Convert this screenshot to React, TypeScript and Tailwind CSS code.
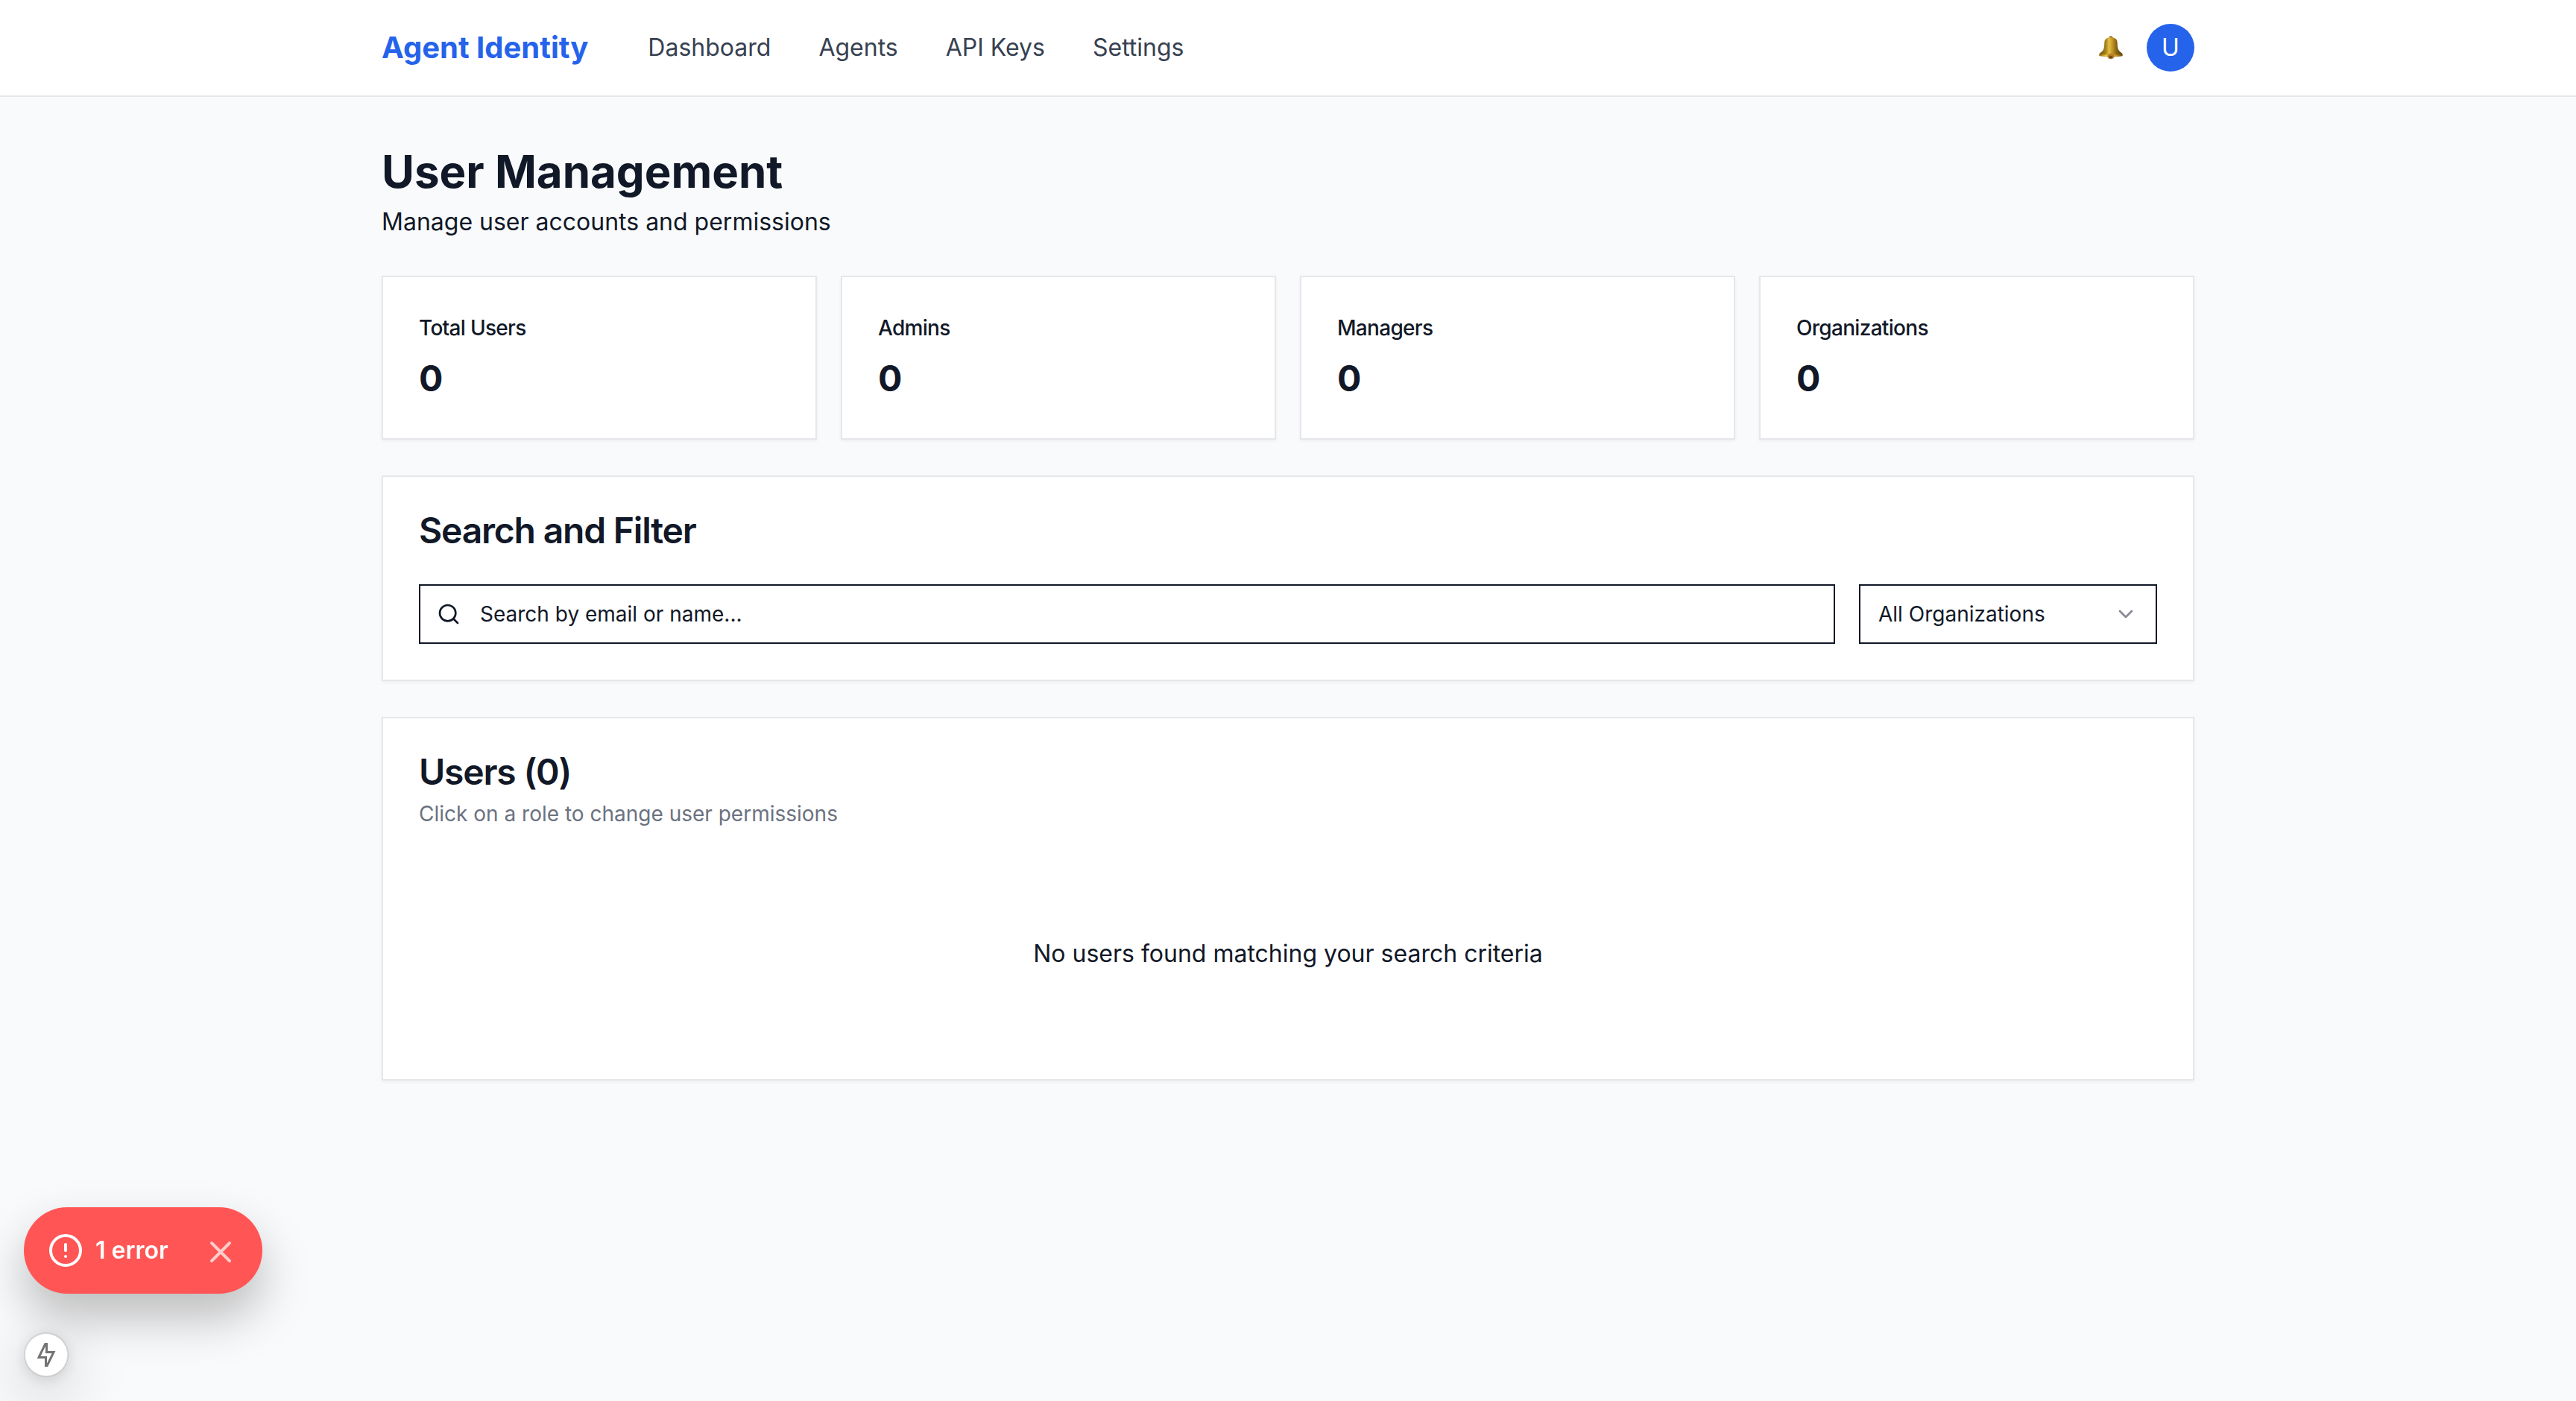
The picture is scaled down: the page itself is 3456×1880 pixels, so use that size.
import { useState, type ReactNode } from "react";
import { ChevronDown, Search } from "lucide-react";

const links = ["Dashboard", "Agents", "API Keys", "Settings"];
const stats = [
  { label: "Total Users", value: 0 },
  { label: "Admins", value: 0 },
  { label: "Managers", value: 0 },
  { label: "Organizations", value: 0 },
];

function BellIcon() {
  return (
    <svg viewBox="0 0 32 32" className="size-8" aria-hidden="true">
      <defs>
        <linearGradient id="bell-body" x1="0" x2="1" y1="0" y2="0">
          <stop offset="0" stopColor="#6e5210" />
          <stop offset="0.28" stopColor="#a8821c" />
          <stop offset="0.42" stopColor="#e3bf45" />
          <stop offset="0.55" stopColor="#c99b26" />
          <stop offset="0.72" stopColor="#8f6a14" />
          <stop offset="1" stopColor="#503a0a" />
        </linearGradient>
        <linearGradient id="bell-rim" x1="0" x2="1" y1="0" y2="0">
          <stop offset="0" stopColor="#8f6e14" />
          <stop offset="0.3" stopColor="#edc935" />
          <stop offset="0.65" stopColor="#dba71f" />
          <stop offset="1" stopColor="#6b4d0c" />
        </linearGradient>
      </defs>
      <ellipse cx="16" cy="2.200" rx="2.600" ry="1.800" fill="#7d5c10" />
      <path d="M16 2.200c-4.800 0-8.200 1.800-8.600 6-.4 4 0 7-1.400 10.200-1.200 2.600-4.200 4-5.400 5.600V27c4.800 1 26 1 30.800 0v-3c-1.200-1.600-4.200-3-5.400-5.600-1.400-3.200-1-6.200-1.400-10.200-.4-4.200-3.800-6-8.600-6z" fill="url(#bell-body)" />
      <path d="M.6 24.600c6.400 1.200 24.400 1.200 30.800 0V27c-4.800 1.200-26 1.200-30.800 0z" fill="url(#bell-rim)" />
      <ellipse cx="16" cy="27.600" rx="4.600" ry="3.600" fill="#b37a28" />
      <ellipse cx="16" cy="28.600" rx="2.200" ry="1.600" fill="#6b4312" />
    </svg>
  );
}

function Card({ children }: { children: ReactNode }) {
  return <section className="border-2 border-[#e5e7eb] bg-white p-12 shadow-[0_2px_4px_rgba(0,0,0,0.05)]">{children}</section>;
}

function Header() {
  return (
    <header className="border-b-2 border-[#e5e7eb] bg-white">
      <div className="mx-auto flex h-32 max-w-[2560px] items-center justify-between px-16">
        <div className="flex items-center gap-20">
          <a href="#" className="text-[40px] leading-14 font-bold text-[#2563eb]">Agent Identity</a>
          <nav className="flex items-center gap-16">
            {links.map((link) => (
              <a key={link} href="#" className="text-[32px] leading-12 text-[#374151]">{link}</a>
            ))}
          </nav>
        </div>
        <div className="flex items-center gap-8">
          <button type="button" aria-label="Notifications"><BellIcon /></button>
          <button type="button" aria-label="Account" className="flex size-16 items-center justify-center rounded-full bg-[#2563eb] text-[32px] leading-12 text-white">U</button>
        </div>
      </div>
    </header>
  );
}

function ErrorToast() {
  return (
    <div role="alert" className="flex h-29 w-80 items-center justify-between rounded-full bg-[#ff5555] pr-10 pl-8 text-white shadow-[0_32px_64px_rgba(0,0,0,0.25)]">
      <div className="flex items-center gap-4">
        <svg viewBox="0 0 48 48" className="size-12" fill="none" stroke="currentColor" strokeWidth="4" strokeLinecap="round" aria-hidden="true">
          <circle cx="24" cy="24" r="20" />
          <path d="M24 16v8M24 32h.02" />
        </svg>
        <span className="text-[32px] leading-12 font-semibold">1 error</span>
      </div>
      <button type="button" aria-label="Close" className="pt-1 opacity-70">
        <svg viewBox="0 0 32 32" className="size-8" fill="none" stroke="currentColor" strokeWidth="4" strokeLinecap="round" aria-hidden="true">
          <path d="M4 4l24 24M28 4L4 28" />
        </svg>
      </button>
    </div>
  );
}

export default function App() {
  const [query, setQuery] = useState("");
  return (
    <div className="min-h-screen bg-[#f9fafb] font-['Inter',sans-serif] text-[#111827]">
      <Header />
      <main className="mx-auto flex max-w-[2560px] flex-col gap-12 px-16 py-16">
        <div className="flex flex-col gap-2">
          <h1 className="text-[60px] leading-18 font-bold">User Management</h1>
          <p className="text-[32px] leading-12">Manage user accounts and permissions</p>
        </div>
        <div className="grid grid-cols-4 gap-8">
          {stats.map((stat) => (
            <Card key={stat.label}>
              <h2 className="text-[28px] leading-10 font-medium tracking-tight">{stat.label}</h2>
              <p className="mt-4 text-5xl leading-16 font-bold">{stat.value}</p>
            </Card>
          ))}
        </div>
        <Card>
          <h2 className="text-5xl leading-12 font-semibold tracking-tight">Search and Filter</h2>
          <div className="mt-12 flex gap-8">
            <div className="relative flex-1">
              <Search className="absolute top-6 left-6 size-8" aria-hidden="true" />
              <input
                type="text"
                aria-label="Search users"
                placeholder="Search by email or name..."
                value={query}
                onChange={(event) => setQuery(event.target.value)}
                className="h-20 w-full border-2 border-[#111827] bg-white pr-6 pl-20 text-[28px] leading-10 placeholder:text-[#111827]"
              />
            </div>
            <div className="relative w-100">
              <select aria-label="Organization" className="h-20 w-full appearance-none border-2 border-[#111827] bg-white px-6 text-[28px] leading-10">
                <option>All Organizations</option>
              </select>
              <ChevronDown className="pointer-events-none absolute top-6 right-[26px] size-8 opacity-50" aria-hidden="true" />
            </div>
          </div>
        </Card>
        <Card>
          <h2 className="text-5xl leading-12 font-semibold tracking-tight">Users (0)</h2>
          <p className="mt-3 text-[28px] leading-10 text-[#6b7280]">Click on a role to change user permissions</p>
          <p className="mt-12 py-24 text-center text-[32px] leading-12">No users found matching your search criteria</p>
        </Card>
      </main>
      <div className="fixed bottom-8 left-8 flex flex-col items-start gap-13">
        <ErrorToast />
        <button type="button" aria-label="Developer tools" className="flex size-15 items-center justify-center rounded-full border-2 border-black/10 bg-white bg-clip-padding text-[#737373] shadow-[0_22px_80px_rgba(0,0,0,0.25),0_4px_20px_rgba(0,0,0,0.12)]">
          <svg viewBox="0 0 32 32" className="size-8" fill="none" stroke="currentColor" strokeWidth="3" aria-hidden="true">
            <path d="M16.500-2v14.500H26L15.500 34V19.500H6z" />
          </svg>
        </button>
      </div>
    </div>
  );
}
